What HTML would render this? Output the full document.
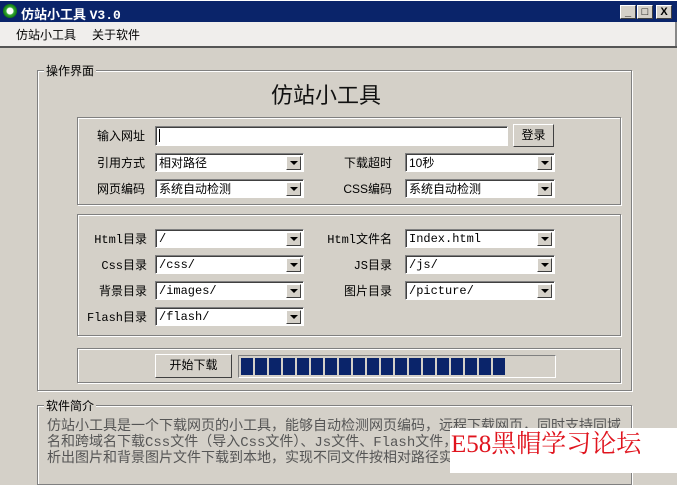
<!DOCTYPE html>
<html><head><meta charset="utf-8"><style>
*{margin:0;padding:0;box-sizing:border-box}
body{width:677px;height:473px;background:#d4d0c8;position:relative;overflow:hidden;font-family:"Liberation Sans","Noto Sans CJK SC",sans-serif;font-size:12px;color:#000}
.a{position:absolute}
.title{left:0;top:0;width:677px;height:22px;background:#0a246a;border-top:1px solid #fff}
.tb{top:4px;width:16px;height:14px;background:#d4d0c8;border:1px solid;border-color:#fff #404040 #404040 #fff;font-size:11px;font-weight:bold;text-align:center;line-height:12px}
.menu{left:0;top:22px;width:677px;height:25px;background:#f0eeec;border-right:2px solid #888}
.group{border:1px solid #808080;box-shadow:1px 1px 0 #fff inset,1px 1px 0 #fff}
.lbl{background:#d4d0c8;padding:0 2px;font-size:12px}
.box{border:1px solid #808080;box-shadow:1px 1px 0 #fff inset,1px 1px 0 #fff}
.sel{height:19px;background:#fff;border:1px solid;border-color:#808080 #fff #fff #808080;box-shadow:1px 1px 0 #404040 inset;padding:2px 0 0 3px;font-size:12px;line-height:15px}
.sel i{position:absolute;right:2px;top:2px;width:15px;height:14px;background:#d4d0c8;border:1px solid;border-color:#fff #404040 #404040 #fff}
.sel i:after{content:"";position:absolute;left:3px;top:4px;border:4px solid transparent;border-top:4px solid #000;border-bottom:0}
.mono{font-family:"Liberation Mono","Noto Sans CJK SC",monospace;font-size:12px}
.r{text-align:right;width:90px}
.btn{background:#d4d0c8;border:1px solid;border-color:#fff #404040 #404040 #fff;box-shadow:-1px -1px 0 #d4d0c8 inset;text-align:center}
.intro div{white-space:nowrap}
</style></head><body>
<div class="a title">
 <div class="a" style="left:3px;top:3px;width:14px;height:14px;border-radius:50%;background:radial-gradient(circle,#fff 0 3px,#3a3 4px,#171 7px)"></div>
 <div class="a" style="left:21px;top:3px;color:#fff;font-weight:bold;font-size:13px">仿站小工具 <span style="font-family:'Liberation Mono',monospace">V3.0</span></div>
 <div class="a tb" style="left:620px">_</div>
 <div class="a tb" style="left:637px">□</div>
 <div class="a tb" style="left:656px">X</div>
</div>
<div class="a menu"><span class="a" style="left:16px;top:4px">仿站小工具</span><span class="a" style="left:92px;top:4px">关于软件</span></div>
<div class="a" style="left:0;top:46px;width:677px;height:2px;background:#555"></div>

<div class="a group" style="left:37px;top:70px;width:595px;height:321px"></div>
<div class="a lbl" style="left:44px;top:62px">操作界面</div>
<div class="a" style="left:0;top:78px;width:677px;text-align:center;font-size:22px;color:#111;padding-right:25px">仿站小工具</div>

<div class="a box" style="left:77px;top:117px;width:544px;height:88px"></div>
<div class="a" style="left:97px;top:127px">输入网址</div>
<div class="a sel" style="left:155px;top:126px;width:353px;height:20px"><span style="border-left:1px solid #000;height:13px;display:inline-block"></span></div>
<div class="a btn" style="left:513px;top:124px;width:41px;height:23px;line-height:20px">登录</div>
<div class="a" style="left:97px;top:154px">引用方式</div>
<div class="a sel" style="left:155px;top:153px;width:149px">相对路径<i></i></div>
<div class="a r" style="left:302px;top:154px">下载超时</div>
<div class="a sel" style="left:405px;top:153px;width:150px">10秒<i></i></div>
<div class="a" style="left:97px;top:180px">网页编码</div>
<div class="a sel" style="left:155px;top:179px;width:149px">系统自动检测<i></i></div>
<div class="a r" style="left:302px;top:180px">CSS编码</div>
<div class="a sel" style="left:405px;top:179px;width:150px">系统自动检测<i></i></div>

<div class="a box" style="left:77px;top:214px;width:544px;height:122px"></div>
<div class="a r mono" style="left:57px;top:230px">Html目录</div>
<div class="a sel mono" style="left:155px;top:229px;width:149px">/<i></i></div>
<div class="a r mono" style="left:302px;top:230px">Html文件名</div>
<div class="a sel mono" style="left:405px;top:229px;width:150px">Index.html<i></i></div>
<div class="a r mono" style="left:57px;top:256px">Css目录</div>
<div class="a sel mono" style="left:155px;top:255px;width:149px">/css/<i></i></div>
<div class="a r mono" style="left:302px;top:256px">JS目录</div>
<div class="a sel mono" style="left:405px;top:255px;width:150px">/js/<i></i></div>
<div class="a r" style="left:57px;top:282px">背景目录</div>
<div class="a sel mono" style="left:155px;top:281px;width:149px">/images/<i></i></div>
<div class="a r" style="left:302px;top:282px">图片目录</div>
<div class="a sel mono" style="left:405px;top:281px;width:150px">/picture/<i></i></div>
<div class="a r mono" style="left:57px;top:308px">Flash目录</div>
<div class="a sel mono" style="left:155px;top:307px;width:149px">/flash/<i></i></div>

<div class="a box" style="left:77px;top:348px;width:544px;height:35px"></div>
<div class="a btn" style="left:155px;top:354px;width:77px;height:24px;line-height:21px">开始下载</div>
<div class="a" style="left:238px;top:355px;width:318px;height:23px;border:1px solid;border-color:#808080 #fff #fff #808080;background:#d4d0c8;padding:2px 0 0 2px;display:flex;gap:2px">
<script>for(let i=0;i<19;i++)document.write('<div style="width:12px;height:17px;background:#0a246a"></div>')</script>
</div>

<div class="a group" style="left:37px;top:405px;width:595px;height:80px"></div>
<div class="a lbl" style="left:44px;top:397px">软件简介</div>
<div class="a intro" style="left:47px;top:419px;width:582px;font-family:'Liberation Mono','Noto Sans CJK SC',monospace;font-size:14px;line-height:16px;color:#555">
<div>仿站小工具是一个下载网页的小工具，能够自动检测网页编码，远程下载网页，同时支持同域</div>
<div>名和跨域名下载Css文件（导入Css文件）、Js文件、Flash文件，并能够解</div>
<div>析出图片和背景图片文件下载到本地，实现不同文件按相对路径实现</div>
</div>
<div class="a" style="left:450px;top:428px;width:227px;height:45px;background:#fff;color:#e0141e;font-family:'Liberation Serif','Noto Serif CJK SC',serif;font-size:25px;line-height:34px;padding-left:1px">E58黑帽学习论坛</div>
</body></html>
